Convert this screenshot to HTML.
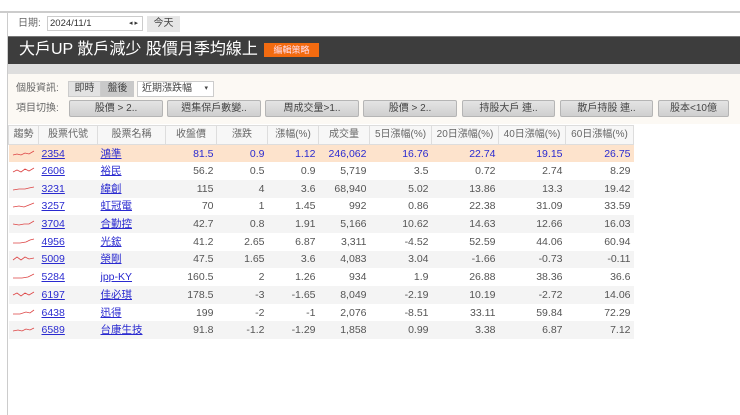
<!DOCTYPE html><html><head><meta charset="utf-8"><style>
*{margin:0;padding:0;box-sizing:border-box}
body{width:740px;height:415px;background:#fff;font-family:"Liberation Sans","Noto Sans CJK TC",sans-serif;font-size:10px;line-height:12px;color:#555;position:relative;overflow:hidden}
.abs{position:absolute}
.btn{position:absolute;top:100px;height:17px;background:linear-gradient(#e4e4e4,#cfcfcf);border:1px solid #b5b5b5;border-radius:2px;text-align:center;line-height:15px;color:#444;font-size:10px}
table{position:absolute;left:8px;top:125px;border-collapse:collapse;font-size:10.5px;line-height:12px}
td,th{height:17.7px;padding:0 3px;white-space:nowrap}
th{height:19px;font-weight:normal;color:#666;border:1px solid #ddd;background:#f7f7f7;text-align:center;font-size:10px}
td{text-align:right;color:#555}
td.c{text-align:left}
td a{color:#2a2ad0;text-decoration:underline}
tr.hl td{background:#fde3cc;color:#2a2ad0}
tr.s td{background:#f4f4f4}
td.p{color:#6a3fd0}
</style></head><body>
<div class="abs" style="left:0;top:11px;width:740px;height:2px;background:#ccc"></div>
<div class="abs" style="left:7px;top:13px;width:1px;height:402px;background:#ccc"></div>
<div class="abs" style="left:18px;top:18px;color:#666;line-height:12px">日期:</div>
<div class="abs" style="left:47px;top:16px;width:96px;height:15px;border:1px solid #ccc;font-size:9.5px;padding-left:2px;line-height:13px;color:#333">2024/11/1<span style="position:absolute;right:4px;font-size:7px">◂ ▸</span></div>
<div class="abs" style="left:147px;top:16px;width:33px;height:16px;background:#e6e6e6;text-align:center;line-height:16px;color:#444">今天</div>
<div class="abs" style="left:8px;top:36px;width:732px;height:28px;background:#3d3d3d;border-top:1px solid #777"></div>
<div class="abs" style="left:19px;top:39px;font-size:16px;color:#fff;line-height:22px;white-space:nowrap">大戶UP 散戶減少 股價月季均線上</div>
<div class="abs" style="left:264px;top:43px;width:55px;height:14px;background:#f36b10;color:#fde;font-size:9px;text-align:center;line-height:14px">編輯策略</div>
<div class="abs" style="left:8px;top:64px;width:732px;height:10px;background:#dedede"></div>
<div class="abs" style="left:8px;top:74px;width:732px;height:50px;background:#fcf9f4"></div>
<div class="abs" style="left:16px;top:83px;color:#666">個股資訊:</div>
<div class="abs" style="left:68px;top:81px;width:33px;height:16px;background:#e2e2e2;border:1px solid #ccc;text-align:center;line-height:14px;color:#444">即時</div>
<div class="abs" style="left:101px;top:81px;width:33px;height:16px;background:#c9c9c9;text-align:center;line-height:16px;color:#444">盤後</div>
<div class="abs" style="left:137px;top:81px;width:77px;height:16px;background:#fff;border:1px solid #ccc;line-height:14px;padding-left:4px;color:#444">近期漲跌幅 <span style="float:right;margin-right:5px;font-size:7px">▾</span></div>
<div class="abs" style="left:16px;top:103px;color:#666">項目切換:</div>
<div class="btn" style="left:69px;width:94px">股價 &gt; 2..</div>
<div class="btn" style="left:167px;width:94px">週集保戶數變..</div>
<div class="btn" style="left:265px;width:94px">周成交量&gt;1..</div>
<div class="btn" style="left:363px;width:94px">股價 &gt; 2..</div>
<div class="btn" style="left:462px;width:93px">持股大戶 連..</div>
<div class="btn" style="left:560px;width:93px">散戶持股 連..</div>
<div class="btn" style="left:658px;width:71px">股本&lt;10億</div>
<table>
<tr><th style="width:29px">趨勢</th><th style="width:59px">股票代號</th><th style="width:68px">股票名稱</th><th style="width:51px">收盤價</th><th style="width:51px">漲跌</th><th style="width:51px">漲幅(%)</th><th style="width:51px">成交量</th><th style="width:62px">5日漲幅(%)</th><th style="width:67px">20日漲幅(%)</th><th style="width:67px">40日漲幅(%)</th><th style="width:68px">60日漲幅(%)</th></tr>
<tr class="hl"><td class="c"><svg width="24" height="8"><path d="M1 6 L5 5 L9 6 L13 4 L17 5 L22 2" stroke="#d44" fill="none" stroke-width=".8"/></svg></td><td class="c"><a>2354</a></td><td class="c"><a>鴻準</a></td><td>81.5</td><td>0.9</td><td>1.12</td><td>246,062</td><td class="p">16.76</td><td class="p">22.74</td><td class="p">19.15</td><td class="p">26.75</td></tr>
<tr><td class="c"><svg width="24" height="8"><path d="M1 6 L5 4 L9 6 L13 3 L17 5 L22 2" stroke="#d44" fill="none" stroke-width=".8"/></svg></td><td class="c"><a>2606</a></td><td class="c"><a>裕民</a></td><td>56.2</td><td>0.5</td><td>0.9</td><td>5,719</td><td>3.5</td><td>0.72</td><td>2.74</td><td>8.29</td></tr>
<tr class="s"><td class="c"><svg width="24" height="8"><path d="M1 6 L7 5 L13 5 L17 4 L22 3" stroke="#d44" fill="none" stroke-width=".8"/></svg></td><td class="c"><a>3231</a></td><td class="c"><a>緯創</a></td><td>115</td><td>4</td><td>3.6</td><td>68,940</td><td>5.02</td><td>13.86</td><td>13.3</td><td>19.42</td></tr>
<tr><td class="c"><svg width="24" height="8"><path d="M1 6 L7 5 L12 6 L17 4 L22 2" stroke="#d44" fill="none" stroke-width=".8"/></svg></td><td class="c"><a>3257</a></td><td class="c"><a>虹冠電</a></td><td>70</td><td>1</td><td>1.45</td><td>992</td><td>0.86</td><td>22.38</td><td>31.09</td><td>33.59</td></tr>
<tr class="s"><td class="c"><svg width="24" height="8"><path d="M1 5 L7 6 L12 5 L17 5 L22 2" stroke="#d44" fill="none" stroke-width=".8"/></svg></td><td class="c"><a>3704</a></td><td class="c"><a>合勤控</a></td><td>42.7</td><td>0.8</td><td>1.91</td><td>5,166</td><td>10.62</td><td>14.63</td><td>12.66</td><td>16.03</td></tr>
<tr><td class="c"><svg width="24" height="8"><path d="M1 6 L8 6 L14 5 L18 3 L22 2" stroke="#d44" fill="none" stroke-width=".8"/></svg></td><td class="c"><a>4956</a></td><td class="c"><a>光鋐</a></td><td>41.2</td><td>2.65</td><td>6.87</td><td>3,311</td><td>-4.52</td><td>52.59</td><td>44.06</td><td>60.94</td></tr>
<tr class="s"><td class="c"><svg width="24" height="8"><path d="M1 6 L5 3 L9 6 L13 3 L17 5 L22 4" stroke="#d44" fill="none" stroke-width=".8"/></svg></td><td class="c"><a>5009</a></td><td class="c"><a>榮剛</a></td><td>47.5</td><td>1.65</td><td>3.6</td><td>4,083</td><td>3.04</td><td>-1.66</td><td>-0.73</td><td>-0.11</td></tr>
<tr><td class="c"><svg width="24" height="8"><path d="M1 6 L10 6 L16 5 L22 2" stroke="#d44" fill="none" stroke-width=".8"/></svg></td><td class="c"><a>5284</a></td><td class="c"><a>jpp-KY</a></td><td>160.5</td><td>2</td><td>1.26</td><td>934</td><td>1.9</td><td>26.88</td><td>38.36</td><td>36.6</td></tr>
<tr class="s"><td class="c"><svg width="24" height="8"><path d="M1 5 L5 3 L9 6 L13 3 L17 5 L22 2" stroke="#d44" fill="none" stroke-width=".8"/></svg></td><td class="c"><a>6197</a></td><td class="c"><a>佳必琪</a></td><td>178.5</td><td>-3</td><td>-1.65</td><td>8,049</td><td>-2.19</td><td>10.19</td><td>-2.72</td><td>14.06</td></tr>
<tr><td class="c"><svg width="24" height="8"><path d="M1 6 L8 6 L14 4 L18 5 L22 2" stroke="#d44" fill="none" stroke-width=".8"/></svg></td><td class="c"><a>6438</a></td><td class="c"><a>迅得</a></td><td>199</td><td>-2</td><td>-1</td><td>2,076</td><td>-8.51</td><td>33.11</td><td>59.84</td><td>72.29</td></tr>
<tr class="s"><td class="c"><svg width="24" height="8"><path d="M1 6 L6 5 L10 6 L14 4 L18 5 L22 3" stroke="#d44" fill="none" stroke-width=".8"/></svg></td><td class="c"><a>6589</a></td><td class="c"><a>台康生技</a></td><td>91.8</td><td>-1.2</td><td>-1.29</td><td>1,858</td><td>0.99</td><td>3.38</td><td>6.87</td><td>7.12</td></tr>
</table>
</body></html>
